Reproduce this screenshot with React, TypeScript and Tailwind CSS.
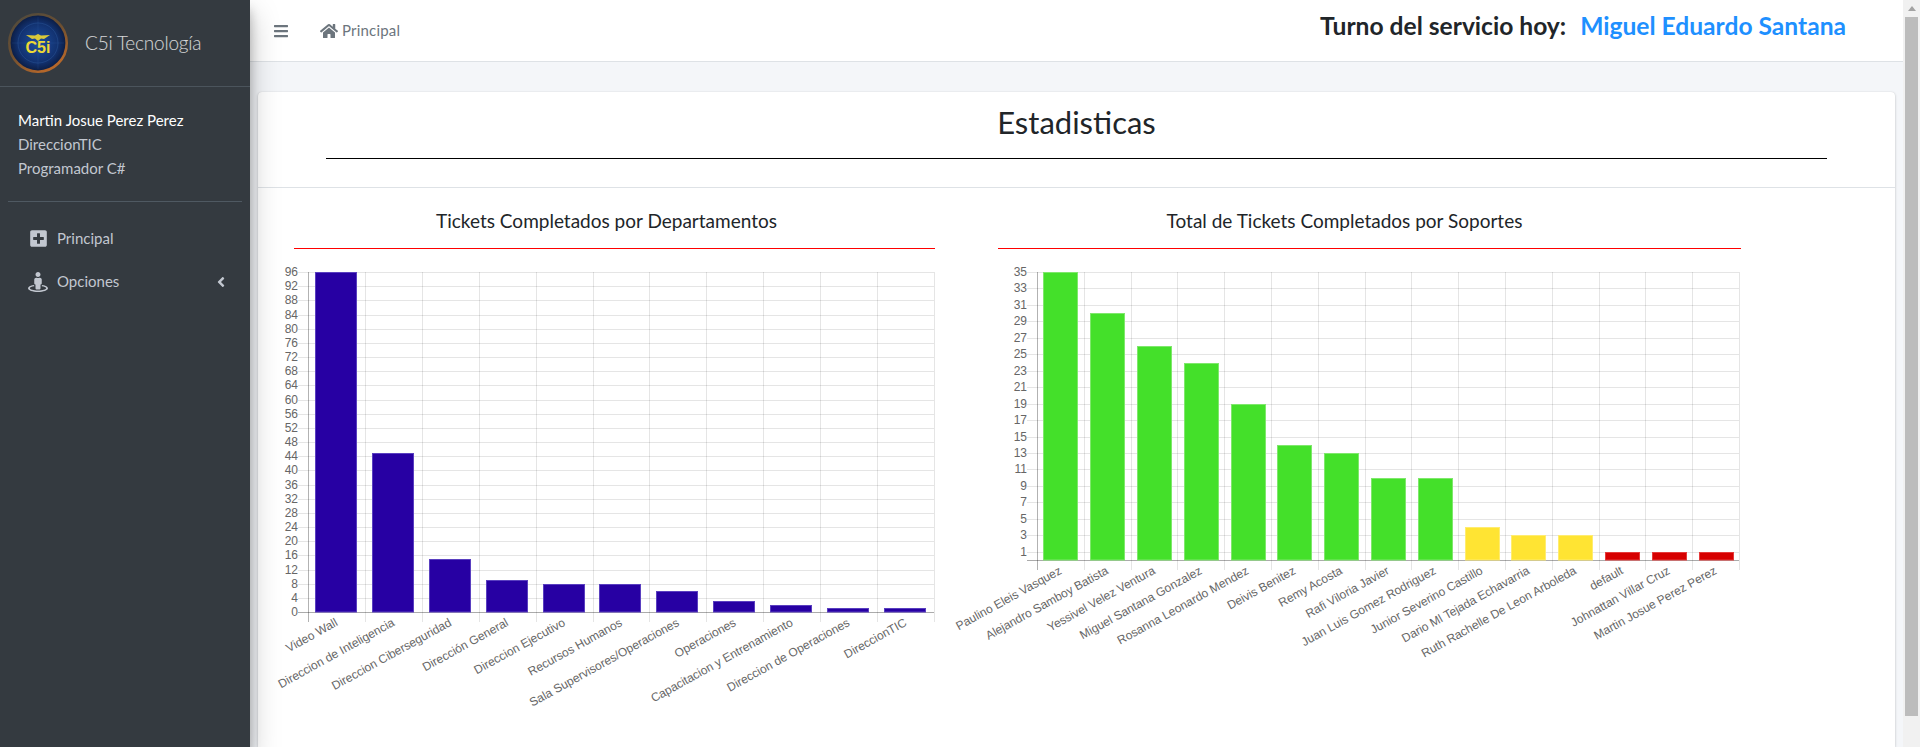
import { FaBars, FaHome, FaPlusSquare, FaStreetView, FaAngleLeft } from 'react-icons/fa';

const departments = [
  ['Video Wall', 96],
  ['Direccion de Inteligencia', 45],
  ['Direccion Ciberseguridad', 15],
  ['Dirección General', 9],
  ['Direccion Ejecutivo', 8],
  ['Recursos Humanos', 8],
  ['Sala Supervisores/Operaciones', 6],
  ['Operaciones', 3],
  ['Capacitacion y Entrenamiento', 2],
  ['Direccion de Operaciones', 1],
  ['DireccionTIC', 1],
] as [string, number][];

const supports = [
  ['Paulino Eleis Vasquez', 35],
  ['Alejandro Samboy Batista', 30],
  ['Yessivel Velez Ventura', 26],
  ['Miguel Santana Gonzalez', 24],
  ['Rosanna Leonardo Mendez', 19],
  ['Deivis Benitez', 14],
  ['Remy Acosta', 13],
  ['Rafi Viloria Javier', 10],
  ['Juan Luis Gomez Rodriguez', 10],
  ['Junior Severino Castillo', 4],
  ['Dario Ml Tejada Echavarria', 3],
  ['Ruth Rachelle De Leon Arboleda', 3],
  ['default', 1],
  ['Johnattan Villar Cruz', 1],
  ['Martin Josue Perez Perez', 1],
] as [string, number][];

type ChartProps = {
  data: [string, number][];
  max: number;
  ticks: number[];
  width: number;
  height: number;
  axisX: number;
  plotWidth: number;
  plotHeight: number;
  barShift: number;
  colorFor: (value: number) => [string, string];
};

function BarChart({ data, max, ticks, width, height, axisX, plotWidth, plotHeight, barShift, colorFor }: ChartProps) {
  const step = plotWidth / data.length;
  const unit = plotHeight / max;
  const base = plotHeight;
  return (
    <svg width={width} height={height} className="block overflow-visible">
      {/* grid */}
      {ticks.concat(0).map((t) => {
        const y = Math.round(base - t * unit) + 0.5;
        return <line key={t} x1={axisX - 10} x2={axisX + plotWidth} y1={y} y2={y} stroke="rgba(0,0,0,0.1)" />;
      })}
      {data.map((_, i) => {
        const x = Math.round(axisX + i * step) + 0.5;
        return <line key={i} x1={x} x2={x} y1={0} y2={base + 10} stroke={i === 0 ? 'rgba(0,0,0,0.3)' : 'rgba(0,0,0,0.1)'} />;
      })}
      <line x1={axisX + plotWidth + 0.5} x2={axisX + plotWidth + 0.5} y1={0} y2={base + 10} stroke="rgba(0,0,0,0.1)" />
      <line x1={axisX - 10} x2={axisX + plotWidth} y1={base + 0.5} y2={base + 0.5} stroke="rgba(0,0,0,0.25)" />

      {/* bars */}
      {data.map(([name, v], i) => {
        const barW = Math.round(step * 0.72);
        const x = Math.round(axisX + i * step + (step - barW) / 2 + barShift) - 0.5;
        const y = Math.round(base - v * unit) + 0.5;
        const [fill, edge] = colorFor(v);
        return <rect key={name} x={x} y={y} width={barW} height={base - y} fill={fill} stroke={edge} />;
      })}

      {/* y labels */}
      {ticks.concat(0).map((t) => {
        if (t === 0 && max === 35) return null;
        return (
          <text key={t} x={axisX - 10} y={base - t * unit + 4} textAnchor="end" fontSize="12" fill="#666" fontFamily="'Liberation Sans', Arial, sans-serif">
            {t}
          </text>
        );
      })}

      {/* x labels */}
      {data.map(([name], i) => {
        const cx = axisX + i * step + step / 2 + 2;
        const cy = base + 13;
        return (
          <text key={name} x={cx} y={cy} textAnchor="end" fontSize="12" fill="#666" fontFamily="'Liberation Sans', Arial, sans-serif" transform={`rotate(-29 ${cx} ${cy})`}>
            {name}
          </text>
        );
      })}
    </svg>
  );
}

function Logo() {
  return (
    <svg width="60" height="60" viewBox="0 0 60 60">
      <defs>
        <radialGradient id="globe" cx="50%" cy="50%" r="50%">
          <stop offset="0%" stopColor="#1d4f9f" />
          <stop offset="70%" stopColor="#12316f" />
          <stop offset="100%" stopColor="#0b1b40" />
        </radialGradient>
        <linearGradient id="rim" x1="0" y1="0" x2="0.6" y2="1">
          <stop offset="0%" stopColor="#4d4a3f" />
          <stop offset="55%" stopColor="#6d4f30" />
          <stop offset="100%" stopColor="#b5672a" />
        </linearGradient>
      </defs>
      <circle cx="30" cy="30" r="28.7" fill="url(#globe)" stroke="url(#rim)" strokeWidth="2.6" />
      <circle cx="30" cy="30" r="20" fill="none" stroke="#3a6ab0" strokeWidth="0.6" opacity="0.5" />
      <path d="M30 4 V56 M4 30 H56" stroke="#3a6ab0" strokeWidth="0.5" opacity="0.35" />
      <path d="M18 22 L27 22.5 L30 21 L33 22.5 L42 22 L36 26 L33 25.5 L30 28 L27 25.5 L24 26 Z" fill="#d9c93a" />
      <text x="30" y="40" textAnchor="middle" fontSize="16" fontWeight="700" fill="#ecd934" fontFamily="'Liberation Sans', Arial, sans-serif">
        C5i
      </text>
    </svg>
  );
}

export default function App() {
  return (
    <div className="flex h-screen overflow-hidden bg-[#f4f6f9] font-['Lato',sans-serif] text-[#212529]">
      {/* Sidebar */}
      <aside className="relative z-10 w-[250px] shrink-0 bg-[#343a40] shadow-[0_14px_28px_rgba(0,0,0,0.25),0_10px_10px_rgba(0,0,0,0.22)]">
        <div className="flex h-[87px] items-center border-b border-[#4b545c] pl-2">
          <Logo />
          <span className="ml-[17px] text-[19px] font-light tracking-[-0.2px] text-white/80">C5i Tecnología</span>
        </div>
        <div className="mx-2 border-b border-[#4f5962] pb-[21px] pl-[10px] pt-[21px] text-[15px] leading-[24px] text-[#c2c7d0]">
          <div className="text-white">Martin Josue Perez Perez</div>
          <div>DireccionTIC</div>
          <div>Programador C#</div>
        </div>
        <nav className="pt-[15px] text-[15px] text-[#c2c7d0]">
          <div className="flex h-[43px] items-center pl-[29px]">
            <FaPlusSquare className="h-[19px] w-[19px]" />
            <span className="ml-[9px]">Principal</span>
          </div>
          <div className="flex h-[43px] items-center pl-[28px] pr-[21px]">
            <FaStreetView className="h-[20px] w-[20px]" />
            <span className="ml-[9px]">Opciones</span>
            <FaAngleLeft className="ml-auto h-[16px] w-[16px]" />
          </div>
        </nav>
      </aside>

      {/* Main */}
      <div className="flex min-w-0 flex-1 flex-col">
        <header className="flex h-[62px] shrink-0 items-center border-b border-[#dee2e6] bg-white pl-6">
          <FaBars className="h-[16px] w-[14px] text-[#6c757d]" />
          <FaHome className="ml-[32px] h-[16px] w-[18px] text-[#6c757d]" />
          <span className="ml-[4px] text-[15px] tracking-[0.2px] text-[#6c757d]">Principal</span>
          <div className="mb-[9px] ml-auto flex items-center pr-[57px] text-[24.6px] font-bold">
            <span className="text-[#212529]">Turno del servicio hoy:</span>
            <span className="ml-[14px] text-[#1e90ff]">Miguel Eduardo Santana</span>
          </div>
        </header>

        <main className="flex-1 px-2 pt-[30px]">
          <section className="h-full rounded-t bg-white shadow-[0_0_1px_rgba(0,0,0,0.125),0_1px_3px_rgba(0,0,0,0.2)]">
            <div className="border-b border-[#dee2e6] pt-[7px]">
              <h1 className="text-center text-[31px] leading-[46px] text-[#212529]">Estadisticas</h1>
              <div className="mx-[68px] mt-[13px] mb-[28px] border-t border-black" />
            </div>
            <div className="flex pl-9 pt-[19px]">
              <div className="w-[641px]">
                <h2 className="pr-[16px] text-center text-[19px] leading-[28px] text-[#212529]">Tickets Completados por Departamentos</h2>
                <div className="mt-[13px] border-t border-[#f00]" />
                <div className="mt-[23px]">
                  <BarChart
                    data={departments}
                    max={96}
                    ticks={Array.from({ length: 24 }, (_, i) => 96 - i * 4)}
                    width={650}
                    height={420}
                    axisX={14}
                    plotWidth={626}
                    plotHeight={340}
                    barShift={0}
                    colorFor={() => ['#2700a3', '#5a3fc0']}
                  />
                </div>
              </div>
              <div className="ml-[63px] w-[743px]">
                <h2 className="pr-[50px] text-center text-[19px] leading-[28px] text-[#212529]">Total de Tickets Completados por Soportes</h2>
                <div className="mt-[13px] border-t border-[#f00]" />
                <div className="mt-[23px]">
                  <BarChart
                    data={supports}
                    max={35}
                    ticks={Array.from({ length: 18 }, (_, i) => 35 - i * 2)}
                    width={760}
                    height={420}
                    axisX={39}
                    plotWidth={702}
                    plotHeight={288}
                    barShift={1}
                    colorFor={(v) =>
                      v >= 10 ? ['#44e02a', '#7fe86c'] : v >= 3 ? ['#ffe433', '#ffec70'] : ['#d60000', '#e53b3b']
                    }
                  />
                </div>
              </div>
            </div>
          </section>
        </main>
      </div>

      {/* Page scrollbar */}
      <div className="flex w-[17px] shrink-0 flex-col bg-[#f1f1f1] pb-[31px]">
        <div className="flex h-[17px] items-center justify-center">
          <div className="h-0 w-0 border-x-[4px] border-b-[5px] border-x-transparent border-b-[#a3a3a3]" />
        </div>
        <div className="mx-[2px] flex-1 bg-[#bcbcbc]" />
      </div>
    </div>
  );
}
